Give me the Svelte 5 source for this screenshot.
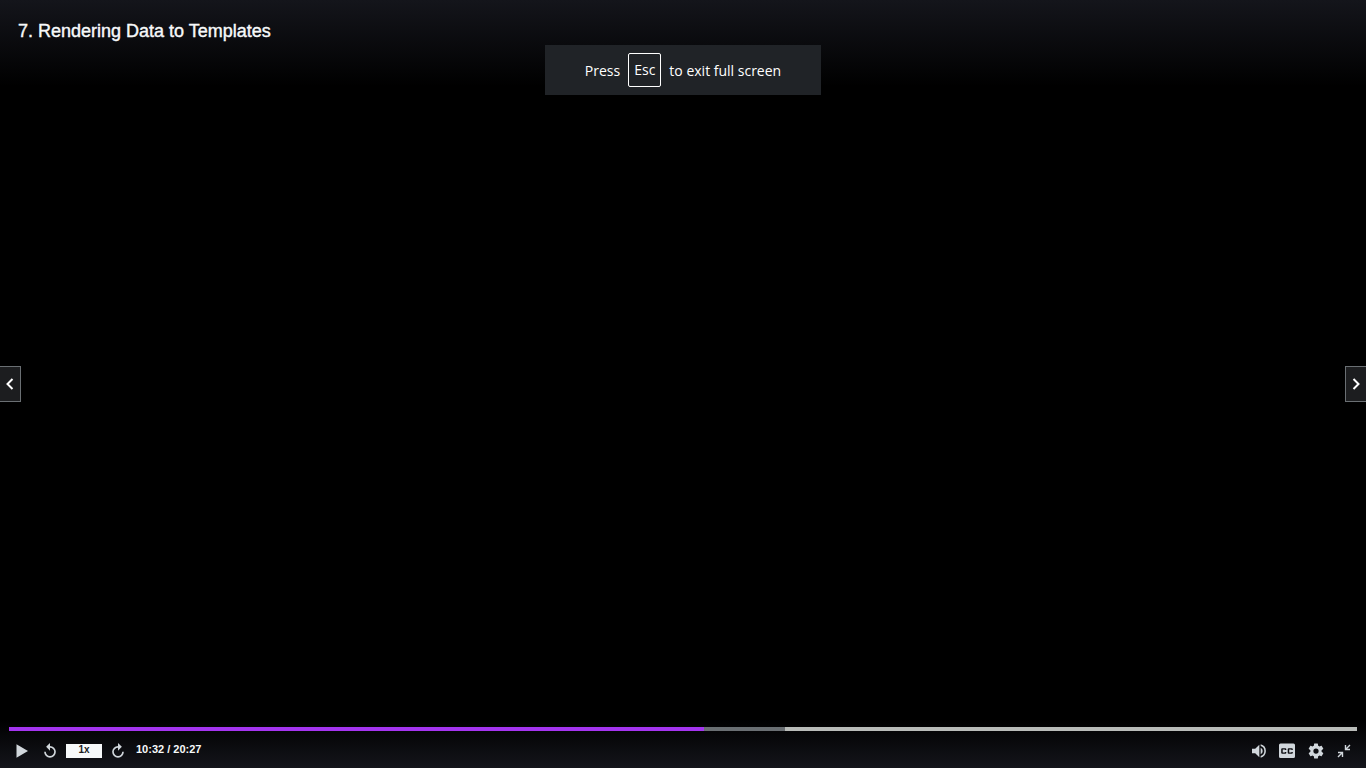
<script>
  let playing = $state(false);
  const total = 1227;
  let current = $state(632.5);
  const buffered = 57.6;
  let played = $derived((current / total) * 100);
  const fmt = (s) => `${Math.floor(s / 60)}:${String(Math.floor(s % 60)).padStart(2, '0')}`;
</script>

<main class="player">
  <header>
    <h1>7. Rendering Data to Templates</h1>
  </header>

  <p class="notice"><span>Press</span><kbd>Esc</kbd><span>to exit full screen</span></p>

  <nav aria-label="Lectures">
    <button class="jump prev" aria-label="Previous lecture">
      <svg width="20" height="34" viewBox="0 0 20 34"><path d="M12.500 12 7.500 17l5 5" /></svg>
    </button>
    <button class="jump next" aria-label="Next lecture">
      <svg width="20" height="34" viewBox="0 0 20 34"><path d="m7.500 12 5 5-5 5" /></svg>
    </button>
  </nav>

  <footer>
    <div class="track">
      <div class="buffered" style="width: {buffered}%"></div>
      <div class="played" style="width: {played}%"></div>
      <input type="range" min="0" max={total} step="0.5" bind:value={current} aria-label="Progress" />
    </div>
    <div class="controls">
      <button aria-label="Play" aria-pressed={playing} onclick={() => (playing = !playing)}>
        <svg width="16" height="16" viewBox="0 0 16 16"><path d="M2.500 1.200v13.600L14 8z" /></svg>
      </button>
      <button class="rewind" aria-label="Rewind 5 seconds" onclick={() => (current = Math.max(0, current - 5))}>
        <svg width="16" height="16" viewBox="0 0 24 24"><path d="M12 4.500V0L6.200 5.800 12 11.500V7a6.300 6.300 0 1 1-6.300 6.300H3.200A8.800 8.800 0 1 0 12 4.500z" /></svg>
      </button>
      <button class="rate" aria-label="Playback rate">1x</button>
      <button class="forward" aria-label="Forward 5 seconds" onclick={() => (current = Math.min(total, current + 5))}>
        <svg width="16" height="16" viewBox="0 0 24 24"><path d="M12 4.500V0l5.800 5.800L12 11.500V7a6.300 6.300 0 1 0 6.300 6.300h2.500A8.800 8.800 0 1 1 12 4.500z" /></svg>
      </button>
      <span class="time">{fmt(current)} / {fmt(total)}</span>
      <div class="right">
        <button aria-label="Mute">
          <svg width="16" height="16" viewBox="0 0 24 24"><path d="M1.500 8.500v7h4.800l6.200 5.700V2.800L6.300 8.500zM14.500 7.200v9.600a5.300 5.300 0 0 0 0-9.600zM14.500 2v2.400a8 8 0 0 1 0 15.200V22a10.300 10.300 0 0 0 0-20z" /></svg>
        </button>
        <button aria-label="Captions">
          <svg width="18" height="16" viewBox="0 0 18 16"><path fill-rule="evenodd" d="M2.500.5h13A1.500 1.500 0 0 1 17 2v11.500a1.500 1.500 0 0 1-1.500 1.500h-13A1.500 1.500 0 0 1 1 13.500V2A1.500 1.500 0 0 1 2.500.5zM4.200 5.200a1 1 0 0 0-1 1v3.600a1 1 0 0 0 1 1h3.100a1 1 0 0 0 1-1V8.900H6.900v.5H4.700V6.600h2.200v.5h1.400v-.9a1 1 0 0 0-1-1zM10.700 5.200a1 1 0 0 0-1 1v3.600a1 1 0 0 0 1 1h3.100a1 1 0 0 0 1-1v-.9h-1.400v.5h-2.200V6.600h2.200v.5h1.400v-.9a1 1 0 0 0-1-1z" /></svg>
        </button>
        <button aria-label="Settings">
          <svg width="18" height="18" viewBox="0 0 24 24"><path d="M19.430 12.980c.04-.32.07-.64.07-.98s-.03-.66-.07-.98l2.110-1.650c.19-.15.24-.42.12-.64l-2-3.460c-.12-.22-.39-.3-.61-.22l-2.490 1c-.52-.4-1.080-.73-1.690-.98l-.38-2.650A.49.49 0 0 0 14 2h-4c-.25 0-.46.18-.49.42l-.38 2.650c-.61.25-1.170.59-1.690.98l-2.490-1c-.23-.09-.49 0-.61.22l-2 3.460c-.13.22-.07.49.12.64l2.110 1.650c-.04.32-.07.65-.07.98s.03.66.07.98l-2.110 1.650c-.19.15-.24.42-.12.64l2 3.460c.12.22.39.3.61.22l2.490-1c.52.4 1.080.73 1.690.98l.38 2.650c.03.24.24.42.49.42h4c.25 0 .46-.18.49-.42l.38-2.650c.61-.25 1.170-.59 1.690-.98l2.490 1c.23.09.49 0 .61-.22l2-3.460c.12-.22.07-.49-.12-.64zM12 15.500a3.500 3.500 0 1 1 0-7 3.500 3.500 0 0 1 0 7z" /></svg>
        </button>
        <button aria-label="Exit full screen">
          <svg class="line" width="16" height="16" viewBox="0 0 16 16"><path d="M14 2 9.800 6.200M9.500 2v4.500H14M2 14l4.200-4.200M2 9.500h4.500V14" /></svg>
        </button>
      </div>
    </div>
  </footer>
</main>

<style>
  :global(body) {
    margin: 0;
    background: #000;
  }
  .player {
    position: relative;
    display: flex;
    flex-direction: column;
    min-height: 100vh;
    background: #000;
    color: #fff;
    font-family: "Liberation Sans", Arial, sans-serif;
  }
  header {
    box-sizing: border-box;
    height: 96px;
    padding: 19px 18px;
    background: linear-gradient(#14151b, #000 90%);
  }
  h1 {
    margin: 0;
    font-size: 18px;
    font-weight: 400;
    line-height: 24px;
    color: #f7f9fa;
    -webkit-text-stroke: 0.4px #f7f9fa;
  }
  .notice {
    position: absolute;
    top: 45px;
    left: 50%;
    transform: translateX(-50%);
    box-sizing: border-box;
    display: flex;
    align-items: center;
    justify-content: center;
    gap: 8px;
    width: 276px;
    height: 50px;
    margin: 0;
    background: #202327;
    font: 14px "Open Sans", sans-serif;
    white-space: nowrap;
  }
  kbd {
    padding: 0 5px;
    border: 1px solid #fff;
    border-radius: 2px;
    font: inherit;
    line-height: 32px;
  }
  nav {
    flex: 1;
    display: flex;
    align-items: center;
    justify-content: space-between;
  }
  button {
    display: flex;
    align-items: center;
    justify-content: center;
    padding: 0;
    border: 0;
    background: none;
    color: #d1d7dc;
    cursor: pointer;
  }
  svg {
    display: block;
    fill: currentColor;
  }
  .jump {
    border: 1px solid #6a6f73;
    background: #1c1d1f;
    color: #fff;
  }
  .jump svg {
    fill: none;
    stroke: currentColor;
    stroke-width: 2;
  }
  .prev {
    border-left: 0;
  }
  .next {
    border-right: 0;
  }
  footer {
    display: flex;
    flex-direction: column;
    justify-content: flex-end;
    box-sizing: border-box;
    height: 96px;
    background: linear-gradient(#000 50%, #14151b);
  }
  .track {
    position: relative;
    height: 4px;
    margin: 0 9px;
    background: #b9bcb9;
  }
  .buffered,
  .played,
  .track input {
    position: absolute;
    top: 0;
    left: 0;
    height: 100%;
  }
  .buffered {
    background: #6a6f73;
  }
  .played {
    background: #a435f0;
  }
  .track input {
    width: 100%;
    margin: 0;
    opacity: 0;
  }
  .controls {
    display: flex;
    align-items: center;
    height: 37px;
    padding: 2px 14px 0;
    box-sizing: border-box;
  }
  .rewind {
    margin: 0 8px 0 12px;
  }
  .rate {
    align-items: flex-start;
    width: 36px;
    height: 14px;
    background: #f7f9fa;
    color: #1c1d1f;
    font: bold 10px/12px "Liberation Sans", Arial, sans-serif;
  }
  .forward {
    margin: 0 10px 0 8px;
  }
  .time {
    padding-bottom: 4px;
    color: #f7f9fa;
    font-size: 11px;
    font-weight: bold;
    line-height: 14px;
  }
  .right {
    display: flex;
    align-items: center;
    gap: 11px;
    margin-left: auto;
  }
  .line {
    fill: none;
    stroke: currentColor;
    stroke-width: 1.4;
  }
</style>
